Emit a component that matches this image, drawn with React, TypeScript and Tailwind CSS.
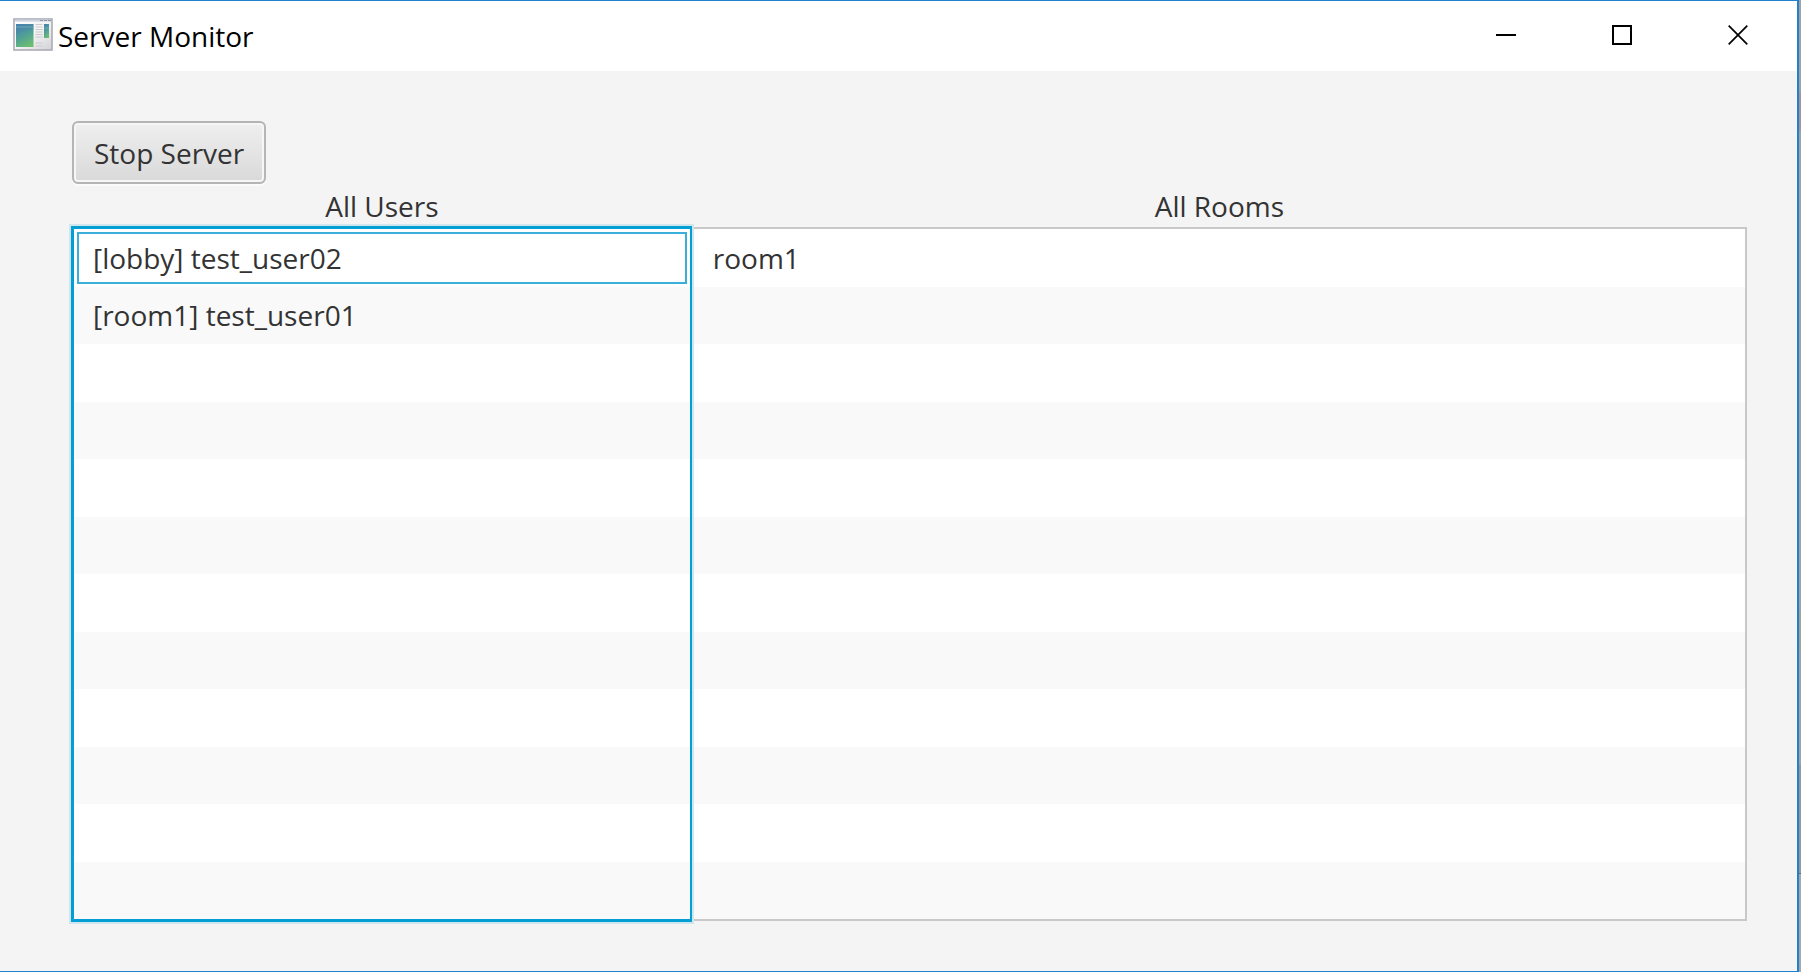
const users = ["[lobby] test_user02", "[room1] test_user01"];
const rooms = ["room1"];
const ROW_COUNT = 12;

function AppIcon() {
  return (
    <svg width="40" height="34" viewBox="0 0 40 34" aria-hidden="true">
      <defs>
        <linearGradient id="frame" x1="0" y1="0" x2="1" y2="1">
          <stop offset="0" stopColor="#ffffff" />
          <stop offset="0.5" stopColor="#f4f4f5" />
          <stop offset="1" stopColor="#d2d2d6" />
        </linearGradient>
        <linearGradient id="pane" x1="0.2" y1="0" x2="0.6" y2="1">
          <stop offset="0" stopColor="#4583ab" />
          <stop offset="0.5" stopColor="#4f9f98" />
          <stop offset="1" stopColor="#6cbd72" />
        </linearGradient>
      </defs>
      <rect x="1" y="1" width="38" height="31" fill="url(#frame)" stroke="#acacb6" strokeWidth="1.6" />
      <rect x="2" y="1.600" width="36" height="2" fill="#cbd3e0" />
      <path d="M27 2.500h3M31 2.500h3M35 2.500h3" stroke="#9197a2" strokeWidth="1" />
      <rect x="3" y="6" width="17.500" height="23" fill="url(#pane)" />
      <path d="M3 17C7 13 13 11.500 20.500 11.500V6H3z" fill="#4a83ad" opacity="0.4" />
      <path d="M3 9h17.500" stroke="#7fb2c6" strokeWidth="0.700" />
      <path
        d="M22.500 6.500h7M22.500 9h7M22.500 11.500h7M22.500 14h7M22.500 16.500h7M22.500 19h7M22.500 25h7M22.500 28h7"
        stroke="#cacacd"
        strokeWidth="1.100"
      />
      <rect x="31" y="6" width="5" height="14" fill="url(#pane)" />
      <path d="M31 10h5" stroke="#7fb2c6" strokeWidth="0.700" />
    </svg>
  );
}

function TitleBar() {
  return (
    <header className="flex h-[70px] shrink-0 items-center justify-between bg-white pr-px pb-0.5 pl-[13px]">
      <div className="flex items-center gap-[5px]">
        <AppIcon />
        <h1 className="pt-0.5 text-[28px] leading-9 text-black">Server Monitor</h1>
      </div>
      <div className="flex h-full">
        <button type="button" aria-label="Minimize" className="flex w-[116px] items-center justify-center">
          <svg width="20" height="20" viewBox="0 0 20 20"><path d="M0 10h20" stroke="#000" strokeWidth="2" /></svg>
        </button>
        <button type="button" aria-label="Maximize" className="flex w-[116px] items-center justify-center">
          <svg width="20" height="20" viewBox="0 0 20 20"><path d="M1 1h18v18H1z" fill="none" stroke="#000" strokeWidth="2" /></svg>
        </button>
        <button type="button" aria-label="Close" className="flex w-[116px] items-center justify-center">
          <svg width="20" height="20" viewBox="0 0 20 20"><path d="M0.700 0.700l18.600 18.600M19.300 0.700L0.700 19.300" stroke="#000" strokeWidth="1.700" /></svg>
        </button>
      </div>
    </header>
  );
}

function StripedList({ items, label, focused }: { items: string[]; label: string; focused?: boolean }) {
  const rows = Array.from({ length: ROW_COUNT }, (_, i) => items[i] ?? "");
  return (
    <ul
      aria-labelledby={label}
      className={
        focused
          ? "relative z-10 -my-px -ml-px flex flex-1 flex-col border-[3px] border-r-2 border-[#039ed3] bg-white shadow-[0_0_0_2px_#d0e6ef]"
          : "flex flex-1 flex-col border-2 border-[#c8c8c8] bg-white"
      }
    >
      {rows.map((text, i) => (
        <li key={i} className="flex min-h-10 flex-1 basis-0 odd:bg-white even:bg-[#f9f9f9]">
          <span
            className={
              focused && i === 0
                ? "m-[3px] flex flex-1 items-center border-2 border-[#39afd9] px-[14px]"
                : "flex flex-1 items-center px-[19px]"
            }
          >
            {text}
          </span>
        </li>
      ))}
    </ul>
  );
}

export default function App() {
  return (
    <div className="flex min-h-screen bg-[linear-gradient(#a3a3a3_0_91px,#a99595_91px_131px,#a3a3a3_131px_610px,#a5a48c_610px_652px,#a3a3a3_652px_765px,#989898_765px_873px,#6a6a6a_873px_874px,#a8a8a8_874px)] pr-0.5 font-['Open_Sans','Noto_Sans',sans-serif]">
      <div className="flex flex-1 flex-col border-y border-r-2 border-[#1e82d2] bg-[#f4f4f4]">
        <TitleBar />
        <main className="flex flex-1 flex-col pt-[50px] pr-[50px] pb-[50px] pl-[72px] text-[28px] leading-9 text-[#333333]">
          <div className="flex">
            <button
              type="button"
              className="h-[63px] rounded-md border-2 border-[#b5b5b5] bg-linear-to-b from-[#efefef] to-[#d9d9d9] px-5 shadow-[inset_0_0_0_2px_#f6f6f6,0_2px_0_#fbfbfb]"
            >
              Stop Server
            </button>
          </div>
          <div className="grid flex-1 grid-cols-[37fr_63fr]">
            <section className="flex flex-col">
              <h2 id="users-label" className="pt-1 pb-[3px] text-center">All Users</h2>
              <StripedList items={users} label="users-label" focused />
            </section>
            <section className="flex flex-col">
              <h2 id="rooms-label" className="pt-1 pb-[3px] text-center">All Rooms</h2>
              <StripedList items={rooms} label="rooms-label" />
            </section>
          </div>
        </main>
      </div>
    </div>
  );
}
